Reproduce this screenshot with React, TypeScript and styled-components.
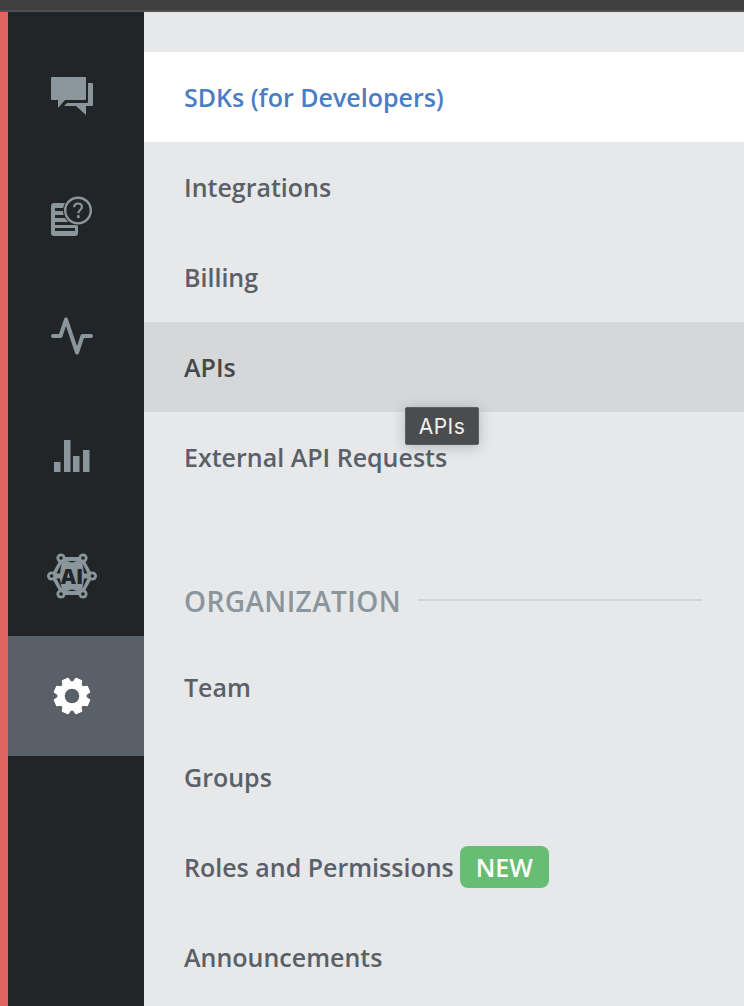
import React from "react";
import styled, { createGlobalStyle } from "styled-components";

const Global = createGlobalStyle`
  html, body { margin: 0; padding: 0; height: 100%; overflow: hidden; background: #e7e8ea; }
  #root { height: 100%; }
  * { box-sizing: border-box; }
`;

const Page = styled.div`
  display: flex;
  flex-direction: column;
  width: 744px;
  height: 1006px;
  overflow: hidden;
  font-family: "Open Sans", "Noto Sans", sans-serif;
`;

const TopBar = styled.div`
  flex: 0 0 12px;
  background: #3f3f3f;
  border-bottom: 2px solid #4f4f4f;
`;

const Body = styled.div`
  flex: 1;
  display: flex;
  min-height: 0;
`;

const Rail = styled.nav`
  flex: 0 0 144px;
  display: flex;
  flex-direction: column;
  padding-top: 24px;
  background: #212528;
  border-left: 8px solid #e0645f;
`;

const RailItem = styled.div<{ $active?: boolean }>`
  flex: 0 0 120px;
  display: flex;
  align-items: center;
  justify-content: center;
  padding-right: 8px;
  background: ${(p) => (p.$active ? "#596067" : "transparent")};
  color: ${(p) => (p.$active ? "#ffffff" : "#8a959c")};
`;

const Menu = styled.main`
  position: relative;
  flex: 1;
  display: flex;
  flex-direction: column;
  padding-top: 40px;
  background: #e7e8ea;
`;

const Row = styled.div<{ $state?: "selected" | "hover" }>`
  flex: 0 0 90px;
  display: flex;
  align-items: center;
  padding-left: 40px;
  font-size: 25px;
  font-weight: 600;
  background: ${(p) =>
    p.$state === "selected" ? "#ffffff" : p.$state === "hover" ? "#d6d7d9" : "transparent"};
  color: ${(p) =>
    p.$state === "selected" ? "#4a7ec4" : p.$state === "hover" ? "#43484d" : "#596067"};
`;

const Section = styled.div`
  display: flex;
  align-items: center;
  gap: 17px;
  height: 51px;
  margin: 73px 42px 16px 40px;
  font-size: 28px;
  font-weight: 600;
  letter-spacing: 0.4px;
  color: #8a959c;
  & > span { white-space: nowrap; }
  &::after {
    content: "";
    flex: 1;
    height: 2px;
    margin-top: -2px;
    background: #d3d6d9;
  }
`;

const Badge = styled.span`
  display: inline-flex;
  align-items: center;
  justify-content: center;
  width: 89px;
  height: 42px;
  margin-left: 6px;
  border-radius: 8px;
  background: #68bd74;
  color: #ffffff;
  font-size: 25px;
  font-weight: 600;
`;

const Tooltip = styled.div`
  position: absolute;
  left: 261px;
  top: 395px;
  width: 74px;
  height: 38px;
  display: flex;
  align-items: center;
  justify-content: center;
  background: #4b4c4e;
  border: 1px solid #5d5e60;
  border-radius: 2px;
  box-shadow: 0 2px 14px rgba(0, 0, 0, 0.22);
  color: #f2f2f2;
  font-family: "Inter", "Liberation Sans", sans-serif;
  font-size: 21px;
  letter-spacing: 0.5px;
  font-weight: 400;
`;

const ChatIcon = () => (
  <svg width="42" height="38" viewBox="0 0 42 38" fill="currentColor" aria-hidden="true">
    <path d="M1 0H34a1 1 0 0 1 1 1V22a1 1 0 0 1-1 1H14L7 31V23H1a1 1 0 0 1-1-1V1a1 1 0 0 1 1-1Z" />
    <path d="M37 6h4a1 1 0 0 1 1 1V28a1 1 0 0 1-1 1H35V38L25 29H13l3-3H36a1 1 0 0 0 1-1Z" />
  </svg>
);

const FaqIcon = () => (
  <svg width="42" height="40" viewBox="0 0 42 40" aria-hidden="true">
    <rect x="0" y="7" width="27" height="33" rx="3" fill="currentColor" />
    <g fill="#212528">
      <rect x="4" y="12" width="12" height="3" />
      <rect x="4" y="19" width="13" height="3" />
      <rect x="4" y="26" width="20" height="3" />
      <rect x="4" y="32" width="20" height="3" />
    </g>
    <circle cx="27" cy="14.5" r="15" fill="#212528" />
    <circle cx="27" cy="14.5" r="12.8" fill="#212528" stroke="currentColor" strokeWidth="2.4" />
    <path
      d="M23.2 11.2c0-2.3 1.7-3.7 3.9-3.7s3.8 1.3 3.8 3.4c0 3.2-3.6 3-3.6 6.3"
      fill="none"
      stroke="currentColor"
      strokeWidth="2.2"
    />
    <rect x="26" y="19.2" width="2.6" height="2.8" fill="currentColor" />
  </svg>
);

const PulseIcon = () => (
  <svg width="42" height="38" viewBox="0 0 42 38" fill="none" stroke="currentColor" strokeWidth="4" strokeLinecap="round" strokeLinejoin="round" aria-hidden="true">
    <path d="M2 19H9.5L15 2.5L26 35.5L31.5 19H40" />
  </svg>
);

const BarsIcon = () => (
  <svg width="36" height="32" viewBox="0 0 36 32" fill="currentColor" aria-hidden="true">
    <rect x="0" y="22" width="6.5" height="10" />
    <rect x="10" y="0" width="6.5" height="32" />
    <rect x="19" y="16" width="6.5" height="16" />
    <rect x="29" y="10" width="6.5" height="22" />
  </svg>
);

const AiIcon = () => (
  <svg width="50" height="46" viewBox="0 0 50 46" aria-hidden="true">
    <path d="M15 5H35L45 23L35 41H15L5 23Z" fill="currentColor" stroke="currentColor" strokeWidth="2" strokeLinejoin="round" />
    <g fill="#212528">
      <path d="M9.5 20.5L14.5 10.5L13 20.5Z" />
      <path d="M40.5 20.5L35.5 10.5L37 20.5Z" />
      <path d="M9.5 25.5L14.5 35.5L13 25.5Z" />
      <path d="M40.5 25.5L35.5 35.5L37 25.5Z" />
      <path d="M20 8H30L25 9.5Z" />
      <path d="M20 38H30L25 36.5Z" />
    </g>
    <g fill="currentColor">
      <circle cx="14" cy="5" r="4.6" />
      <circle cx="36" cy="5" r="4.6" />
      <circle cx="4.6" cy="23" r="4.6" />
      <circle cx="45.4" cy="23" r="4.6" />
      <circle cx="14" cy="41" r="4.6" />
      <circle cx="36" cy="41" r="4.6" />
    </g>
    <g fill="#212528">
      <circle cx="14" cy="5" r="1.8" />
      <circle cx="36" cy="5" r="1.8" />
      <circle cx="4.6" cy="23" r="1.8" />
      <circle cx="45.4" cy="23" r="1.8" />
      <circle cx="14" cy="41" r="1.8" />
      <circle cx="36" cy="41" r="1.8" />
    </g>
    <text x="25" y="30.5" textAnchor="middle" fontFamily="'Open Sans', sans-serif" fontWeight="800" fontSize="21" fill="#212528">AI</text>
  </svg>
);

const gearPoints = Array.from({ length: 8 }, (_, i) => {
  const mid = ((i + 0.5) * Math.PI) / 4;
  const pt = (r: number, a: number) =>
    `${(19 + r * Math.cos(a)).toFixed(2)} ${(19 + r * Math.sin(a)).toFixed(2)}`;
  return [pt(14, mid - 0.3), pt(18, mid - 0.17), pt(18, mid + 0.17), pt(14, mid + 0.3)].join(" L");
}).join(" L");

const GearIcon = () => (
  <svg width="38" height="38" viewBox="0 0 38 38" aria-hidden="true">
    <path
      fill="currentColor"
      stroke="currentColor"
      strokeWidth="1.4"
      strokeLinejoin="round"
      d={`M${gearPoints}Z`}
    />
    <circle cx="19" cy="19" r="7.3" fill="#596067" />
  </svg>
);

const railIcons = [ChatIcon, FaqIcon, PulseIcon, BarsIcon, AiIcon, GearIcon];

export default function App() {
  return (
    <Page>
      <Global />
      <TopBar />
      <Body>
        <Rail>
          {railIcons.map((Icon, i) => (
            <RailItem key={i} $active={i === 5}>
              <Icon />
            </RailItem>
          ))}
        </Rail>
        <Menu>
          <Row $state="selected">SDKs (for Developers)</Row>
          <Row>Integrations</Row>
          <Row>Billing</Row>
          <Row $state="hover">APIs</Row>
          <Row>External API Requests</Row>
          <Section>
            <span>ORGANIZATION</span>
          </Section>
          <Row>Team</Row>
          <Row>Groups</Row>
          <Row>
            Roles and Permissions
            <Badge>NEW</Badge>
          </Row>
          <Row>Announcements</Row>
          <Tooltip>APIs</Tooltip>
        </Menu>
      </Body>
    </Page>
  );
}
